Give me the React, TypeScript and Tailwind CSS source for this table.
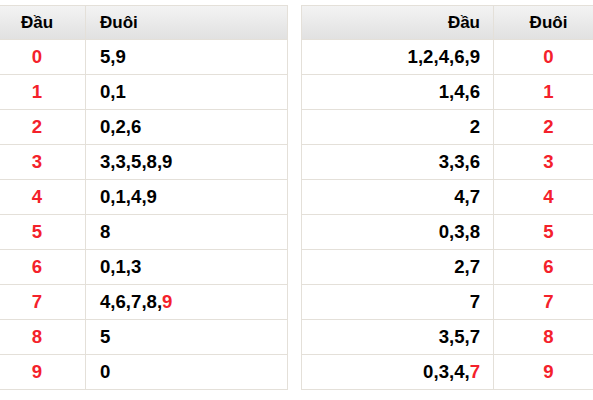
const left: { dau: string; duoi: string[]; hot?: number }[] = [
  { dau: "0", duoi: ["5", "9"] },
  { dau: "1", duoi: ["0", "1"] },
  { dau: "2", duoi: ["0", "2", "6"] },
  { dau: "3", duoi: ["3", "3", "5", "8", "9"] },
  { dau: "4", duoi: ["0", "1", "4", "9"] },
  { dau: "5", duoi: ["8"] },
  { dau: "6", duoi: ["0", "1", "3"] },
  { dau: "7", duoi: ["4", "6", "7", "8", "9"], hot: 4 },
  { dau: "8", duoi: ["5"] },
  { dau: "9", duoi: ["0"] }
]

const right: { dau: string[]; duoi: string; hot?: number }[] = [
  { dau: ["1", "2", "4", "6", "9"], duoi: "0" },
  { dau: ["1", "4", "6"], duoi: "1" },
  { dau: ["2"], duoi: "2" },
  { dau: ["3", "3", "6"], duoi: "3" },
  { dau: ["4", "7"], duoi: "4" },
  { dau: ["0", "3", "8"], duoi: "5" },
  { dau: ["2", "7"], duoi: "6" },
  { dau: ["7"], duoi: "7" },
  { dau: ["3", "5", "7"], duoi: "8" },
  { dau: ["0", "3", "4", "7"], duoi: "9", hot: 3 }
]

function Digits({ list, hot }: { list: string[]; hot?: number }) {
  return (
    <>
      {list.map((d, i) => (
        <span key={i}>
          <span className={i === hot ? "text-[#f4212b]" : ""}>{d}</span>
          {i < list.length - 1 && ","}
        </span>
      ))}
    </>
  )
}

const headCls =
  "flex h-[33px] items-center bg-gradient-to-b from-[#f3f3f3] to-[#e1e1e1] text-[17px] font-bold text-black"
const cellCls = "flex h-[34px] items-center text-[18.6px] font-bold"

export default function App() {
  return (
    <div
      className="min-h-[400px] overflow-hidden bg-white pt-[5px]"
      style={{ fontFamily: '"Liberation Sans", Arial, sans-serif' }}
    >
      <div className="ml-[-12px] flex gap-[13px]">
        <div className="w-[300px] shrink-0 border border-[#e4e0d9]">
          <div className="grid grid-cols-[97px_1fr]">
            <div className={`${headCls} justify-center border-r border-[#e4e0d9]`}>Đầu</div>
            <div className={`${headCls} pl-[14px]`}>Đuôi</div>
          </div>
          {left.map((r) => (
            <div key={r.dau} className="grid grid-cols-[97px_1fr] border-t border-[#e4e0d9]">
              <div className={`${cellCls} justify-center border-r border-[#e4e0d9] text-[#f4212b]`}>
                {r.dau}
              </div>
              <div className={`${cellCls} pl-[14px] text-black`}>
                <Digits list={r.duoi} hot={r.hot} />
              </div>
            </div>
          ))}
        </div>
        <div className="w-[303px] shrink-0 border border-[#e4e0d9]">
          <div className="grid grid-cols-[192px_1fr]">
            <div className={`${headCls} justify-end border-r border-[#e4e0d9] pr-[13px]`}>Đầu</div>
            <div className={`${headCls} justify-center`}>Đuôi</div>
          </div>
          {right.map((r) => (
            <div key={r.duoi} className="grid grid-cols-[192px_1fr] border-t border-[#e4e0d9]">
              <div className={`${cellCls} justify-end border-r border-[#e4e0d9] pr-[13px] text-black`}>
                <Digits list={r.dau} hot={r.hot} />
              </div>
              <div className={`${cellCls} justify-center text-[#f4212b]`}>{r.duoi}</div>
            </div>
          ))}
        </div>
      </div>
    </div>
  )
}
